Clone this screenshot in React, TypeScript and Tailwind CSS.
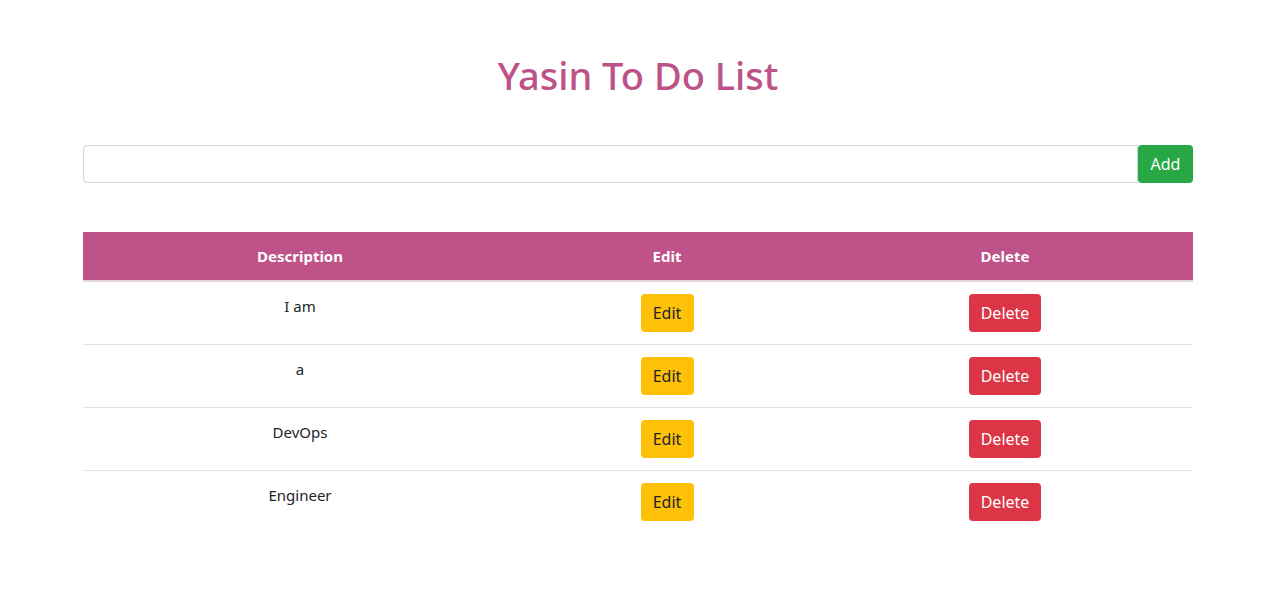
import React from "react";

const todos = ["I am", "a", "DevOps", "Engineer"];

const font = { fontFamily: '"Noto Sans", "Open Sans", sans-serif' };

export default function App() {
  return (
    <div className="min-h-[600px] w-[1276px] bg-white text-[16px] text-[#212529]" style={font}>
      <div className="mx-auto w-[1110px] pt-[51px]">
        <h1 className="text-center text-[38px] font-medium leading-[48px] text-[#bc5287]">
          Yasin To Do List
        </h1>

        <div className="mt-[46px] flex h-[38px]">
          <input
            type="text"
            className="h-[38px] flex-1 rounded-l-[4px] border border-[#ced4da] px-3 outline-none"
          />
          <button className="h-[38px] w-[55px] rounded-[4px] bg-[#28a745] text-white">
            Add
          </button>
        </div>

        <div className="mt-[49px]">
          <div className="grid grid-cols-[434px_300px_376px] border-b-2 border-[#e3d4e2] bg-[#bf5288] text-center text-[15px] font-bold text-white">
            <div className="py-3 leading-6">Description</div>
            <div className="py-3 leading-6">Edit</div>
            <div className="py-3 leading-6">Delete</div>
          </div>
          {todos.map((t, i) => (
            <div
              key={i}
              className={`grid grid-cols-[434px_300px_376px] text-center ${i > 0 ? "border-t border-[#dee2e6]" : ""}`}
            >
              <div className="py-3 text-[15px] leading-6">{t}</div>
              <div className="py-3">
                <button className="h-[38px] w-[53px] rounded-[4px] bg-[#ffc107] leading-6 text-[#212529]">
                  Edit
                </button>
              </div>
              <div className="py-3">
                <button className="h-[38px] w-[72px] rounded-[4px] bg-[#dc3545] leading-6 text-white">
                  Delete
                </button>
              </div>
            </div>
          ))}
        </div>
      </div>
    </div>
  );
}
